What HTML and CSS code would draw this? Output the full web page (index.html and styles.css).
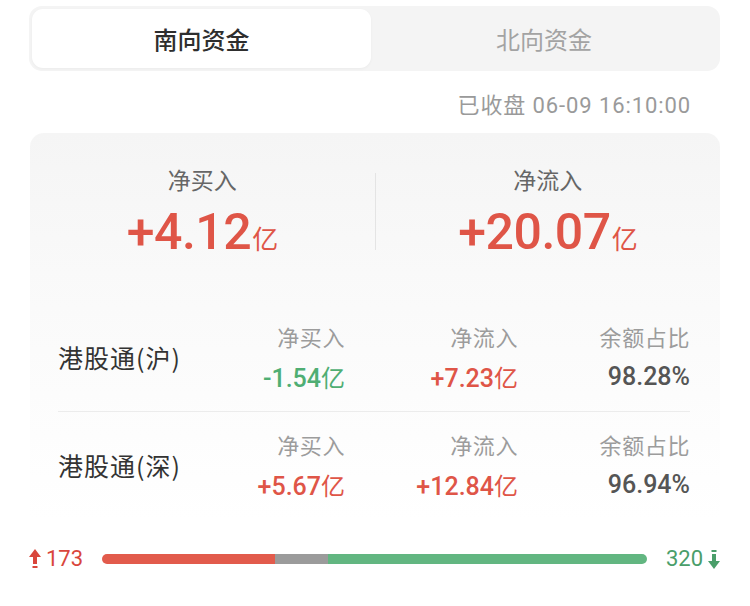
FILE: index.html
```html
<!DOCTYPE html>
<html lang="zh">
<head>
<meta charset="utf-8">
<link rel="stylesheet" href="styles.css">
</head>
<body>
<div class="tabs">
  <div class="tab active">南向资金</div>
  <div class="tab">北向资金</div>
</div>
<div class="time">已收盘 06-09 16:10:00</div>
<div class="card">
  <div class="summary">
    <div class="sum-col">
      <div class="sum-label">净买入</div>
      <div class="sum-value up">+4.12<span class="unit">亿</span></div>
    </div>
    <div class="vdiv"></div>
    <div class="sum-col">
      <div class="sum-label">净流入</div>
      <div class="sum-value up">+20.07<span class="unit">亿</span></div>
    </div>
  </div>
  <div class="rows">
    <div class="row">
      <div class="name">港股通(沪)</div>
      <div class="cell"><div class="lbl">净买入</div><div class="val down">-1.54<span class="u">亿</span></div></div>
      <div class="cell"><div class="lbl">净流入</div><div class="val up">+7.23<span class="u">亿</span></div></div>
      <div class="cell"><div class="lbl">余额占比</div><div class="val neutral">98.28%</div></div>
    </div>
    <div class="row">
      <div class="name">港股通(深)</div>
      <div class="cell"><div class="lbl">净买入</div><div class="val up">+5.67<span class="u">亿</span></div></div>
      <div class="cell"><div class="lbl">净流入</div><div class="val up">+12.84<span class="u">亿</span></div></div>
      <div class="cell"><div class="lbl">余额占比</div><div class="val neutral">96.94%</div></div>
    </div>
  </div>
</div>
<div class="breadth">
  <div class="count up">
    <svg class="arrow" width="12" height="20" viewBox="0 0 12 20"><polygon points="0,8 6,0 12,8" fill="#d9463c"/><rect x="4" y="7" width="4" height="8" fill="#d9463c"/><rect x="3.5" y="17" width="5" height="2" fill="#d9463c"/></svg>
    <span>173</span>
  </div>
  <div class="bar">
    <div class="seg red" style="width:31.7%"></div>
    <div class="seg grey" style="width:9.8%"></div>
    <div class="seg green" style="width:58.5%"></div>
  </div>
  <div class="count down">
    <span>320</span>
    <svg class="arrow" width="12" height="20" viewBox="0 0 12 20"><rect x="3.5" y="1" width="5" height="2" fill="#4a9e6a"/><rect x="4" y="5" width="4" height="8" fill="#4a9e6a"/><polygon points="0,12 6,20 12,12" fill="#4a9e6a"/></svg>
  </div>
</div>
</body>
</html>
```

FILE: styles.css
```css
* { box-sizing: border-box; }
html, body { margin: 0; padding: 0; background: #fff; }
body {
  width: 750px;
  font-family: Roboto, "Noto Sans CJK SC", sans-serif;
  color: #333;
}
.tabs {
  display: flex;
  margin: 6px 30px 0 29px;
  height: 65px;
  padding: 3px;
  background: #f4f4f4;
  border-radius: 13px;
}
.tab {
  flex: 1;
  display: flex;
  align-items: center;
  justify-content: center;
  font-size: 24px;
  color: #a3a3a3;
  font-family: "Noto Sans CJK SC", sans-serif;
}
.tab.active {
  flex: 0 0 339px;
  background: #fff;
  border-radius: 11px;
  color: #2e2e2e;
  font-weight: 500;
  box-shadow: 0 1px 3px rgba(0,0,0,0.04);
}
.time {
  margin-top: 21px;
  padding-right: 59px;
  text-align: right;
  font-size: 22px;
  line-height: 28px;
  height: 28px;
  letter-spacing: 0.9px;
  color: #9a9a9a;
  font-family: Roboto, "Noto Sans CJK SC", sans-serif;
}
.card {
  margin: 13px 30px 0 30px;
  padding-top: 31px;
  border-radius: 14px 14px 0 0;
  background: linear-gradient(#f5f5f5 0%, #fafafa 45%, #fff 100%);
  height: 388px;
}
.summary {
  display: flex;
  align-items: stretch;
}
.sum-col {
  flex: 1;
  display: flex;
  flex-direction: column;
  align-items: center;
  gap: 10px;
}
.vdiv {
  width: 1px;
  background: #e4e4e4;
  margin: 9px 0 10px;
}
.sum-label {
  font-family: "Noto Sans CJK SC", sans-serif;
  font-size: 23px;
  line-height: 30px;
  height: 30px;
  color: #666;
}
.sum-value {
  font-size: 50px;
  line-height: 56px;
  height: 56px;
  font-weight: 500;
  letter-spacing: -0.5px;
}
.sum-value .unit {
  font-family: "Noto Sans CJK SC", sans-serif;
  font-size: 26px;
  font-weight: 400;
  margin-left: 1px;
}
.up { color: #df5547; }
.down { color: #4fae73; }
.neutral { color: #555; }
.rows {
  margin-top: 44px;
  padding: 0 30px 0 28px;
}
.row {
  display: grid;
  grid-template-columns: minmax(0, 1fr) 172px 173px 172px;
  align-items: center;
  padding: 17px 0 18px;
}
.row + .row { border-top: 1px solid #ececec; }
.name {
  font-family: "Noto Sans CJK SC", sans-serif;
  font-size: 25px;
  letter-spacing: 1px;
  color: #333;
  white-space: nowrap;
}
.cell {
  display: flex;
  flex-direction: column;
  align-items: flex-end;
  gap: 10px;
}
.lbl {
  font-family: "Noto Sans CJK SC", sans-serif;
  font-size: 22px;
  letter-spacing: 0.6px;
  line-height: 30px;
  height: 30px;
  color: #9c9c9c;
}
.val {
  font-size: 25px;
  line-height: 32px;
  height: 32px;
  font-weight: 500;
  white-space: nowrap;
}
.val .u {
  font-family: "Noto Sans CJK SC", sans-serif;
  font-weight: 400;
  font-size: 24px;
}
.breadth {
  display: flex;
  align-items: center;
  gap: 19px;
  margin-top: 26px;
  padding: 0 30px 0 29px;
  height: 24px;
}
.count {
  display: flex;
  align-items: center;
  gap: 5px;
  font-size: 22px;
  line-height: 24px;
}
.count.up { color: #d9463c; }
.count.down { color: #4a9e6a; }
.bar {
  flex: 1;
  display: flex;
  height: 10px;
  border-radius: 5px;
  overflow: hidden;
}
.seg { height: 100%; }
.seg.red { background: #e25b4c; }
.seg.grey { background: #9b9b9b; }
.seg.green { background: #62b681; }
```
